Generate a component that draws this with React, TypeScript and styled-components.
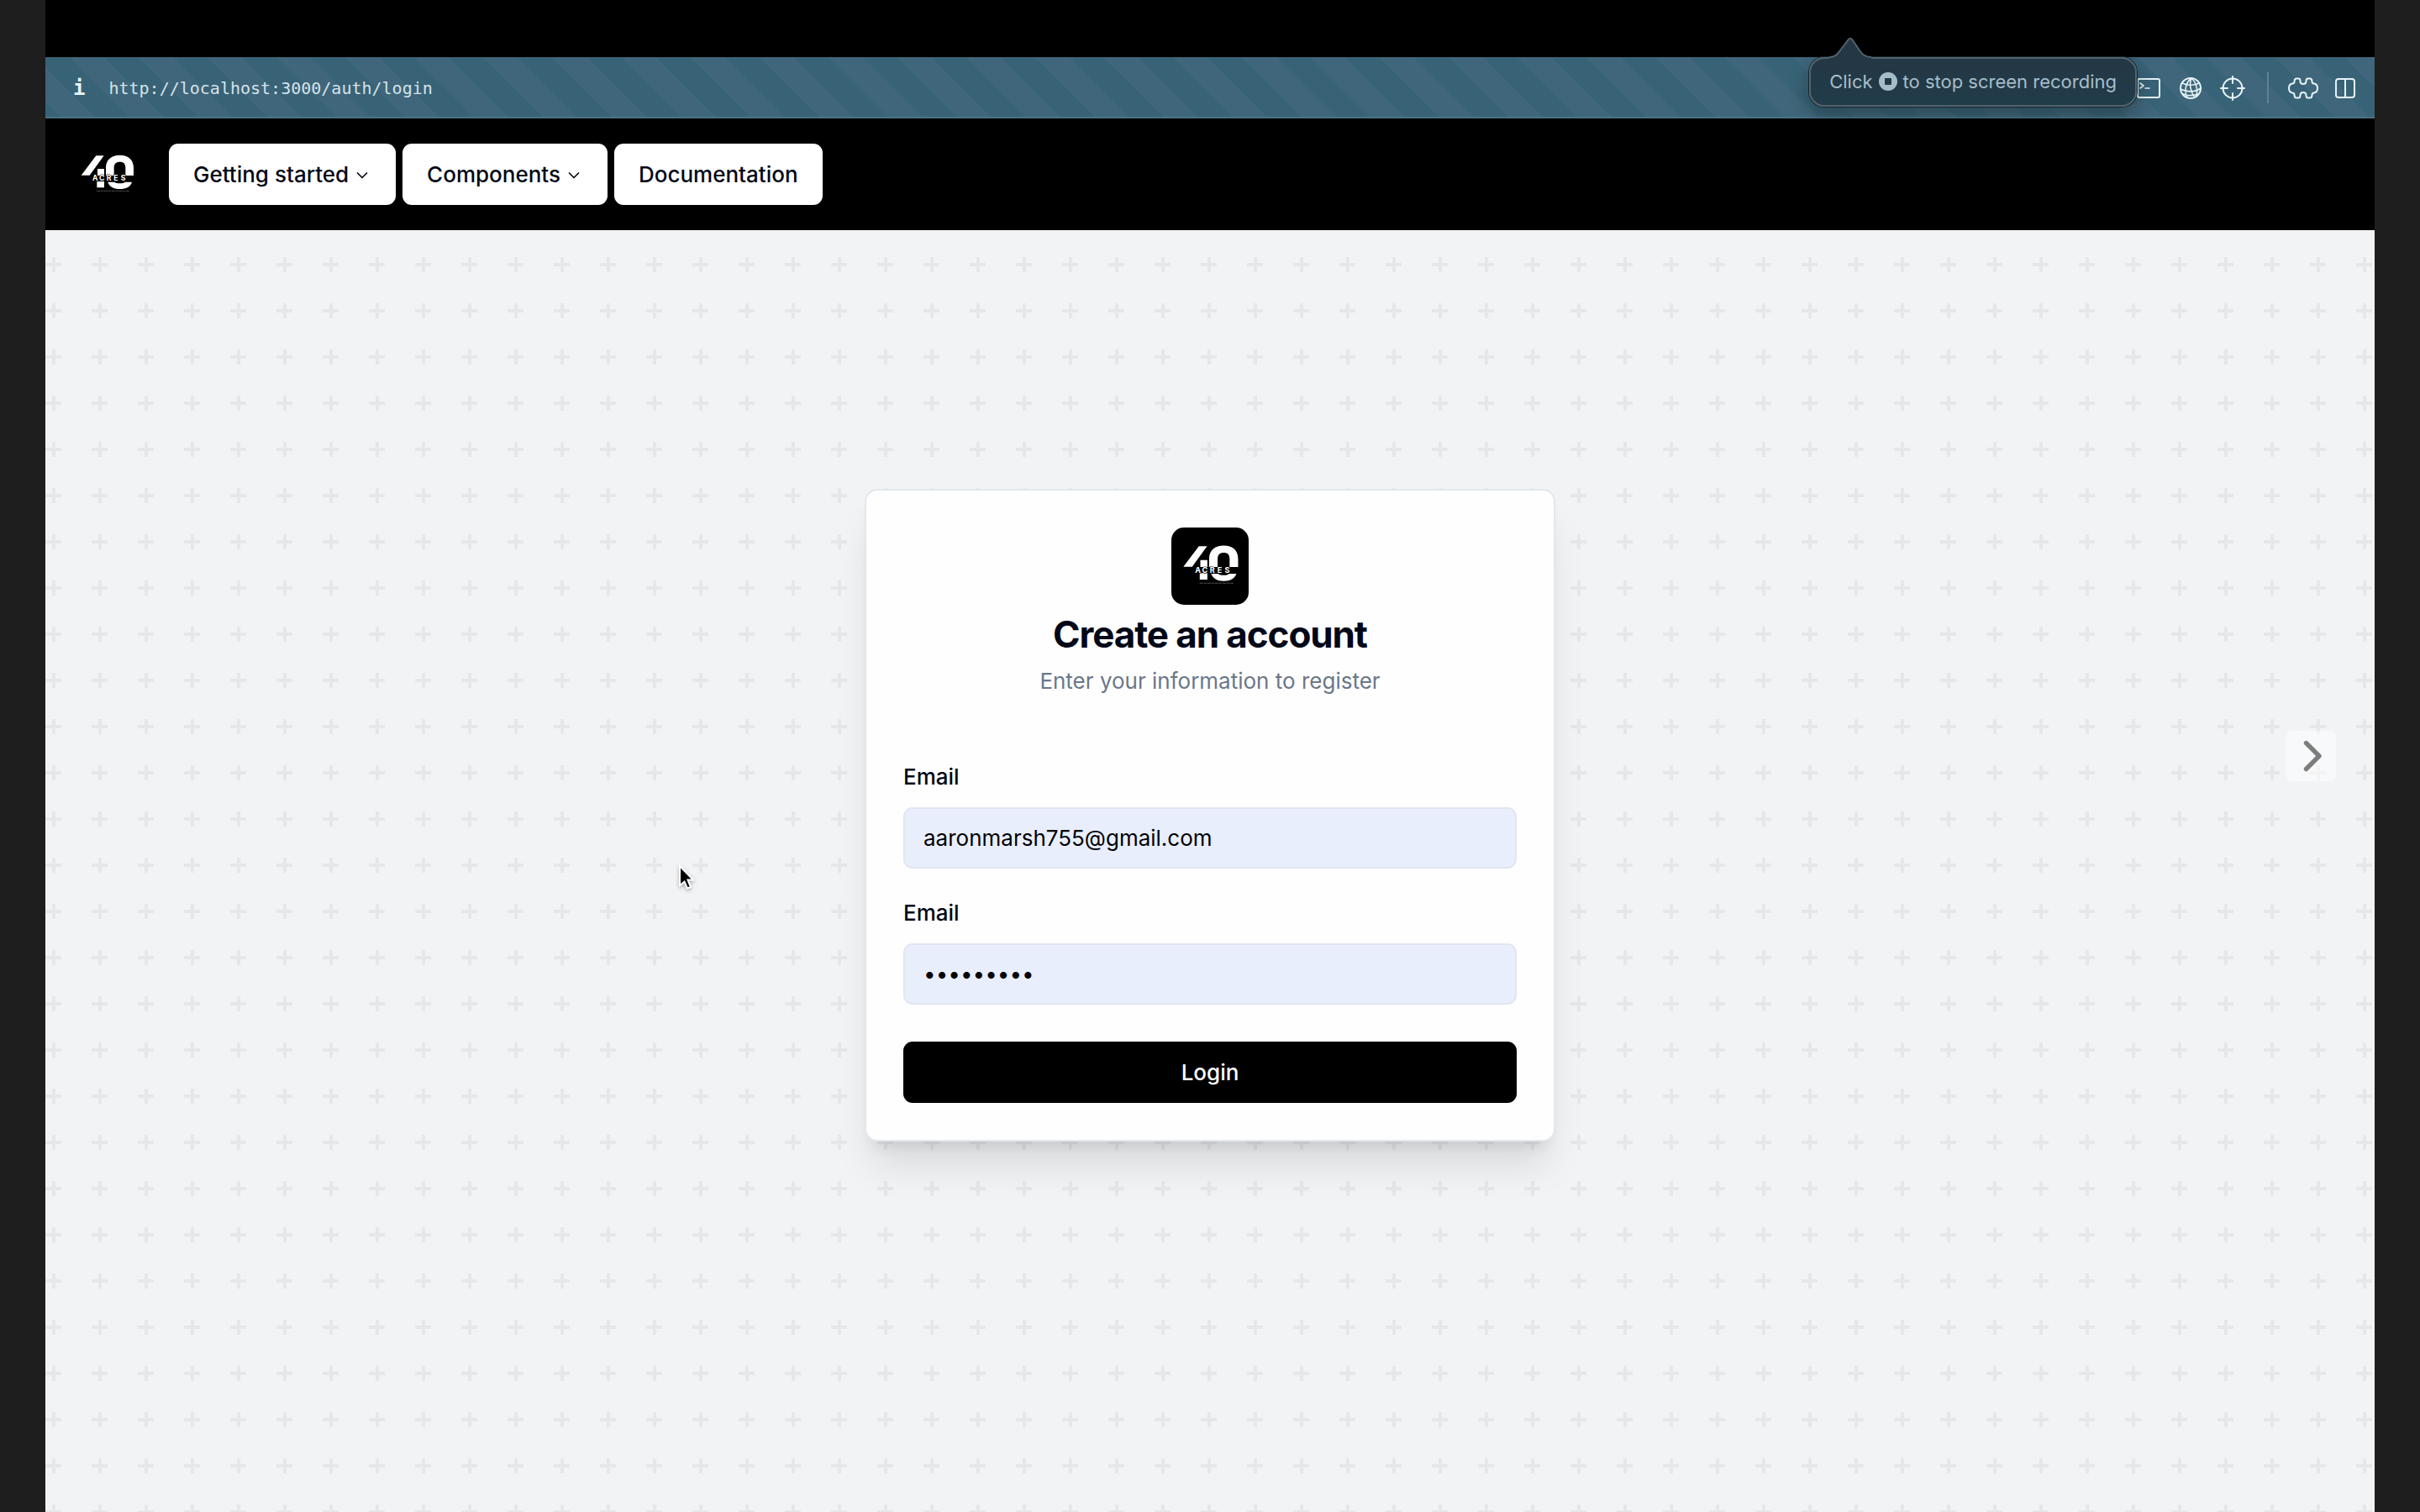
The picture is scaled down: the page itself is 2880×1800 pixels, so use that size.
import React from "react";
import styled, { createGlobalStyle } from "styled-components";

const GlobalStyle = createGlobalStyle`
  *, *::before, *::after { box-sizing: border-box; }
  body {
    margin: 0;
    background: #1e1e1e;
    color: #020817;
    font-family: Inter, "Liberation Sans", sans-serif;
    font-size: 26px;
  }
  button, input { font: inherit; }
`;

const Frame = styled.div`
  position: relative;
  display: flex;
  flex-direction: column;
  min-height: 100vh;
  margin: 0 54px;
  overflow: hidden;
`;

const TopStrip = styled.div`
  flex: none;
  height: 68px;
  background: #000;
`;

const AddressBar = styled.div`
  flex: none;
  display: flex;
  align-items: center;
  justify-content: space-between;
  height: 73px;
  padding: 0 10px 0 33px;
  box-shadow: inset 0 -2px #4b7284;
  background: repeating-linear-gradient(
    45deg,
    #386376 0 14px,
    #3f667a 14px 43px,
    #386376 43px 58px
  );
`;

const Address = styled.div`
  display: flex;
  align-items: center;
  gap: 28px;
  color: #d5e2e9;
  font: 20px/28px "DejaVu Sans Mono", "Liberation Mono", monospace;
`;

const InfoMark = styled.b`
  color: #e9f4f9;
  font-size: 24px;
`;

const Tools = styled.div`
  display: flex;
  align-items: center;
`;

const ToolButton = styled.button`
  display: grid;
  place-items: center;
  width: 50px;
  height: 40px;
  padding: 0;
  border: 0;
  background: none;
  color: #e6f3f9;
`;

const ToolIcon = styled.svg`
  fill: none;
  stroke: currentColor;
  stroke-width: 2;
  stroke-linejoin: round;
  stroke-linecap: round;
`;

const ToolDivider = styled.span`
  width: 2px;
  height: 37px;
  margin: 0 16px;
  background: #5d8294;
`;

const Hint = styled.div`
  position: absolute;
  top: 68px;
  right: 283px;
  display: flex;
  align-items: center;
  gap: 7px;
  height: 59px;
  padding: 0 22px 2px;
  border: 2px solid #53636d;
  border-radius: 18px;
  background: linear-gradient(#243744, #203c4a);
  box-shadow: 0 0 0 1px #16252d, 0 10px 24px rgba(0, 0, 0, 0.3);
  color: #a6bdc9;
  font-size: 22px;
  line-height: 28px;
  white-space: nowrap;
`;

const HintArrow = styled.svg`
  position: absolute;
  left: 22px;
  bottom: 55px;
`;

const SiteHeader = styled.header`
  flex: none;
  display: flex;
  align-items: center;
  gap: 30px;
  height: 133px;
  padding: 0 29px;
  background: #000;
`;

const Nav = styled.nav`
  display: flex;
  gap: 8px;
`;

const NavButton = styled.button`
  display: flex;
  align-items: center;
  gap: 5px;
  height: 73px;
  padding: 0 29px;
  border: 0;
  border-radius: 11px;
  background: #fff;
  color: #020817;
  font-weight: 500;
  text-decoration: none;
  white-space: nowrap;
`;

const NavLink = styled(NavButton).attrs({ as: "a" })``;

const Chevron = styled.svg`
  margin-top: 3px;
`;

const crossTile = encodeURIComponent(
  '<svg xmlns="http://www.w3.org/2000/svg" width="55" height="55"><path d="M0 41H19M10 32V50" fill="none" stroke="#e6e7e9" stroke-width="4"/></svg>'
);

const Surface = styled.main`
  flex: 1;
  display: grid;
  place-items: center;
  padding-bottom: 133px;
  background: #f1f3f5 url("data:image/svg+xml,${crossTile}");
`;

const Card = styled.section`
  width: 822px;
  max-width: 100%;
  padding: 44px;
  border: 2px solid #e3e7ed;
  border-radius: 15px;
  background: #fefefe;
  box-shadow: 0 37px 46px -9px rgba(0, 0, 0, 0.1), 0 15px 18px -11px rgba(0, 0, 0, 0.1);
`;

const CardHead = styled.div`
  display: flex;
  flex-direction: column;
  align-items: center;
  gap: 7px;
  margin-bottom: 80px;
`;

const LogoBadge = styled.div`
  display: grid;
  border-radius: 15px;
  background: #000;
  overflow: hidden;
`;

const Title = styled.h1`
  margin: 0;
  font-size: 44px;
  font-weight: 700;
  line-height: 56px;
  letter-spacing: -0.025em;
`;

const Subtitle = styled.p`
  margin: 0;
  color: #6b7789;
  line-height: 42px;
`;

const Form = styled.form`
  display: grid;
  gap: 40px;
`;

const Field = styled.div`
  display: grid;
  gap: 23px;
`;

const Label = styled.label`
  font-weight: 500;
  line-height: 26px;
`;

const TextInput = styled.input`
  width: 100%;
  height: 73px;
  padding: 0 22px;
  border: 2px solid #e1e6ef;
  border-radius: 11px;
  background: #e8eefc;
  color: #020208;
  outline: none;
`;

const SubmitButton = styled.button`
  height: 73px;
  margin-top: 4px;
  border: 0;
  border-radius: 11px;
  background: #000;
  color: #fff;
  font-weight: 500;
`;

const NextButton = styled.button`
  position: absolute;
  top: 870px;
  right: 46px;
  display: grid;
  place-items: center;
  width: 60px;
  height: 60px;
  padding: 0;
  border: 0;
  border-radius: 8px;
  background: rgba(255, 255, 255, 0.5);
`;

const Pointer = styled.svg`
  position: absolute;
  top: 1028px;
  left: 752px;
  filter: drop-shadow(0 2px 2px rgba(0, 0, 0, 0.3));
`;

function Logo({ size }: { size: number }) {
  return (
    <svg width={size} height={size} viewBox="9 12 264 264" role="img" aria-label="40 Acres">
      <g fill="#fff">
        <path d="M103 76H131L80 146H50Z" />
        <path d="M108 123H132V147H108ZM106 168H132V190H106Z" />
        <path
          fillRule="evenodd"
          d="M138 147V120C138 90 158 74 188 74S237 90 237 120V147H208V120C208 105 202 98 188 98S167 105 167 120V147Z"
        />
        <path d="M145 170H168C172 174 180 175 188 175S202 174 207 170H231C226 187 210 195 188 195S151 187 145 170Z" />
        <text
          x="90 114 140 166 191"
          y="166"
          fontFamily="Inter, sans-serif"
          fontSize="26"
          fontWeight="700"
          stroke="#000"
          strokeWidth="3"
          paintOrder="stroke"
        >
          ACRES
        </text>
      </g>
      <path d="M105 202H221" stroke="#777" strokeWidth="2" strokeDasharray="14 2 8 2" />
    </svg>
  );
}

function ChevronDown() {
  return (
    <Chevron width="22" height="22" viewBox="0 0 22 22" fill="none" stroke="#020817" strokeWidth="1.7" strokeLinecap="round" strokeLinejoin="round">
      <path d="m5.500 8 5.500 5.500L16.500 8" />
    </Chevron>
  );
}

export default function App() {
  return (
    <Frame>
      <GlobalStyle />
      <TopStrip />
      <AddressBar>
        <Address>
          <InfoMark>i</InfoMark>
          <span>http://localhost:3000/auth/login</span>
        </Address>
        <Tools>
          <ToolButton aria-label="Console">
            <ToolIcon width="30" height="26" viewBox="0 0 30 26">
              <rect x="2" y="2" width="26" height="22" rx="2" />
              <path d="M5 7l4 3-4 3M11 13h5" strokeWidth="1.6" />
            </ToolIcon>
          </ToolButton>
          <ToolButton aria-label="Network">
            <ToolIcon width="28" height="28" viewBox="0 0 28 28">
              <circle cx="14" cy="14" r="12" />
              <path d="M15 2C8 7 6 18 10 25M15 2c-3 7-1 17 4 23M15 2c5 4 8 12 6 21M4 8c6 3 14 3 20 0M2 15c7 4 17 4 24-1M5 21c5 2 12 2 18 0" strokeWidth="1.6" />
            </ToolIcon>
          </ToolButton>
          <ToolButton aria-label="Inspect element">
            <ToolIcon width="32" height="32" viewBox="0 0 32 32">
              <circle cx="16" cy="16" r="11.5" />
              <path d="M16 2v8M16 22v8M2 16h8M22 16h8" />
            </ToolIcon>
          </ToolButton>
          <ToolDivider />
          <ToolButton aria-label="Extensions">
            <ToolIcon width="36" height="28" viewBox="0 0 36 28">
              <path d="M10 2.500H12.500C14.500 2.500 14.500 4 14.500 5.500C14.500 8 16 9 18 9S21.500 8 21.500 5.500C21.500 4 21.500 2.500 23.500 2.500H26C28 2.500 28.500 4 28.500 6S29.500 8.500 31 8.500C33.500 9 35 11 35 14S33.500 19 31 19.500C29.500 19.500 28.500 20 28.500 22S28 25.500 26 25.500H23.500C21.500 25.500 21.500 24 21.500 22.500C21.500 20 20 19 18 19S14.500 20 14.500 22.500C14.500 24 14.500 25.500 12.500 25.500H10C8 25.500 7.500 24 7.500 22S6.500 19.500 5 19.500C2.500 19 1 17 1 14S2.500 9 5 8.500C6.500 8.500 7.500 8 7.500 6S8 2.500 10 2.500Z" />
            </ToolIcon>
          </ToolButton>
          <ToolButton aria-label="Split view">
            <ToolIcon width="24" height="26" viewBox="0 0 24 26">
              <rect x="1" y="2" width="22" height="22" rx="3" />
              <path d="M12 2v22" />
            </ToolIcon>
          </ToolButton>
        </Tools>
      </AddressBar>

      <SiteHeader>
        <Logo size={88} />
        <Nav>
          <NavButton>
            Getting started
            <ChevronDown />
          </NavButton>
          <NavButton>
            Components
            <ChevronDown />
          </NavButton>
          <NavLink href="#documentation">Documentation</NavLink>
        </Nav>
      </SiteHeader>

      <Surface>
        <Card>
          <CardHead>
            <LogoBadge>
              <Logo size={92} />
            </LogoBadge>
            <Title>Create an account</Title>
            <Subtitle>Enter your information to register</Subtitle>
          </CardHead>
          <Form onSubmit={(event: React.FormEvent) => event.preventDefault()}>
            <Field>
              <Label htmlFor="email">Email</Label>
              <TextInput id="email" type="email" defaultValue="aaronmarsh755@gmail.com" />
            </Field>
            <Field>
              <Label htmlFor="password">Email</Label>
              <TextInput id="password" type="password" defaultValue="acres4040" />
            </Field>
            <SubmitButton type="submit">Login</SubmitButton>
          </Form>
        </Card>
      </Surface>

      <Hint role="status">
        <HintArrow width="50" height="26" viewBox="0 0 50 26">
          <path d="M0 24C8 24 10 20 13 16L22 4C24 1 26 1 28 4L36 16C39 20 42 24 50 24V26H0Z" fill="#243744" />
          <path d="M0 24C8 24 10 20 13 16L22 4C24 1 26 1 28 4L36 16C39 20 42 24 50 24" fill="none" stroke="#53636d" strokeWidth="2" />
        </HintArrow>
        <span>Click</span>
        <svg width="22" height="22" viewBox="0 0 22 22">
          <circle cx="11" cy="11" r="11" fill="#a6bdc9" />
          <rect x="7" y="7" width="8" height="8" rx="1" fill="#223a47" />
        </svg>
        <span>to stop screen recording</span>
      </Hint>

      <NextButton aria-label="Next">
        <svg width="60" height="60" viewBox="0 0 60 60" fill="none" stroke="#7d7d7d" strokeWidth="5.4" strokeLinecap="round" strokeLinejoin="round">
          <path d="M24.500 14.500 40 30 24.500 45.500" />
        </svg>
      </NextButton>

      <Pointer width="24" height="36" viewBox="0 0 24 36">
        <path d="M3 3V26L8.500 21.500 12 29.500 16 28 12.500 19.500H19Z" fill="#000" stroke="#fff" strokeWidth="2" />
      </Pointer>
    </Frame>
  );
}
